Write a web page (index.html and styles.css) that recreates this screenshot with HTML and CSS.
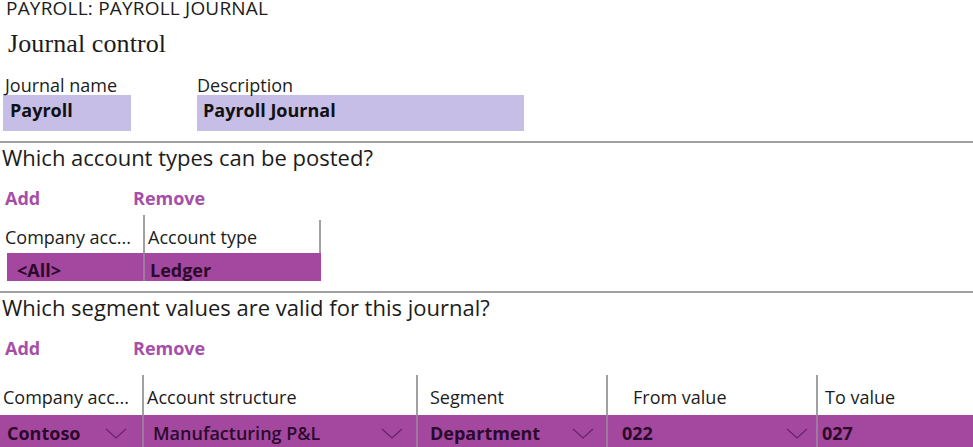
FILE: index.html
```html
<!DOCTYPE html>
<html lang="en">
<head>
  <meta charset="UTF-8" />
  <meta name="viewport" content="width=device-width, initial-scale=1" />
  <title>Payroll journal</title>
  <link rel="stylesheet" href="styles.css">
</head>
<body>

  <div class="page-title">PAYROLL: PAYROLL JOURNAL</div>
  <h1 class="form-title">Journal control</h1>

  <!-- Journal fields -->
  <div class="fields">
    <div class="field field-name">
      <label>Journal name</label>
      <div class="field-box">Payroll</div>
    </div>
    <div class="field field-desc">
      <label>Description</label>
      <div class="field-box">Payroll Journal</div>
    </div>
  </div>

  <!-- Account types -->
  <section class="block">
    <h2>Which account types can be posted?</h2>
    <div class="actions">
      <a class="act act-add">Add</a>
      <a class="act">Remove</a>
    </div>
    <div class="grid grid-types">
      <div class="head">Company acc...</div>
      <div class="head sep">Account type</div>
      <div class="head-end"></div>
      <div class="cell first">&lt;All&gt;</div>
      <div class="cell">Ledger</div>
      <div class="cell-end"></div>
    </div>
  </section>

  <!-- Segment values -->
  <section class="block">
    <h2>Which segment values are valid for this journal?</h2>
    <div class="actions">
      <a class="act act-add">Add</a>
      <a class="act">Remove</a>
    </div>
    <div class="grid grid-segments">
      <div class="head">Company acc...</div>
      <div class="head sep">Account structure</div>
      <div class="head sep col-seg">Segment</div>
      <div class="head sep col-from">From value</div>
      <div class="head sep col-to">To value</div>

      <div class="cell drop col1">Contoso <svg class="chev" viewBox="0 0 22 11"><path d="M1 1 L11 10 L21 1"/></svg></div>
      <div class="cell drop col2 light">Manufacturing P&amp;L <svg class="chev" viewBox="0 0 22 11"><path d="M1 1 L11 10 L21 1"/></svg></div>
      <div class="cell drop col3">Department <svg class="chev" viewBox="0 0 22 11"><path d="M1 1 L11 10 L21 1"/></svg></div>
      <div class="cell drop col4">022 <svg class="chev" viewBox="0 0 22 11"><path d="M1 1 L11 10 L21 1"/></svg></div>
      <div class="cell col5">027</div>
    </div>
  </section>

</body>
</html>
```

FILE: styles.css
```css
body {
  margin: 0;
  font-family: 'Open Sans', sans-serif;
  color: #1c1c1c;
  background-color: #fff;
  overflow: hidden;
}

.page-title {
  font-size: 19px;
  line-height: 16px;
  padding-left: 6px;
  letter-spacing: 0.2px;
  white-space: nowrap;
}

.form-title {
  font-family: 'Liberation Serif', serif;
  font-weight: normal;
  font-size: 26px;
  line-height: 28px;
  margin: 14px 0 0 8px;
  letter-spacing: 0.1px;
}

.fields {
  display: flex;
  margin-top: 17px;
}

.field label {
  display: block;
  font-size: 18px;
  line-height: 20px;
}

.field-box {
  background-color: #c7bee7;
  height: 36px;
  line-height: 30px;
  font-weight: bold;
  font-size: 18px;
  color: #111;
}

.field-name {
  width: 128px;
  margin-left: 3px;
}

.field-name label {
  padding-left: 2px;
}

.field-name .field-box {
  padding-left: 7px;
}

.field-desc {
  width: 327px;
  margin-left: 66px;
}

.field-desc .field-box {
  padding-left: 6px;
}

.block {
  border-top: 2px solid #a0a0a0;
  margin-top: 10px;
}

.block h2 {
  font-weight: normal;
  font-size: 22px;
  line-height: 28px;
  margin: 0 0 0 2px;
}

.actions {
  display: flex;
  margin-top: 17px;
  padding-left: 5px;
}

.act {
  font-weight: bold;
  font-size: 18px;
  line-height: 20px;
  color: #a54fa9;
}

.act-add {
  width: 128px;
}

.grid {
  display: grid;
  font-size: 18px;
}

.head {
  white-space: nowrap;
  overflow: hidden;
}

.sep {
  border-left: 2px solid #a0a0a0;
}

.cell {
  background-color: #a4489f;
  color: #2b0a2b;
  font-weight: bold;
  white-space: nowrap;
}

/* account types table */

.grid-types {
  grid-template-columns: 143px 176px 2px;
  width: 321px;
  margin-top: 7px;
}

.grid-types .head {
  height: 38px;
  padding-top: 6px;
  line-height: 32px;
  box-sizing: border-box;
  padding-left: 5px;
}

.grid-types .head.sep {
  padding-left: 3px;
}

.head-end {
  background-color: #a0a0a0;
  margin-top: 5px;
}

.grid-types .cell {
  height: 28px;
  padding-top: 3px;
  line-height: 28px;
  box-sizing: border-box;
  padding-left: 5px;
  border-left: 2px solid #9d7ba0;
}

.grid-types .cell.first {
  margin-left: 7px;
  padding-left: 10px;
  border-left: none;
}

.cell-end {
  background-color: #a4489f;
}

/* segment values table */

.grid-segments {
  grid-template-columns: 142px 274px 190px 210px 1fr;
  margin-top: 17px;
}

.grid-segments .head {
  height: 40px;
  padding-top: 8px;
  line-height: 28px;
  box-sizing: border-box;
  padding-left: 3px;
}

.grid-segments .head.col-seg {
  padding-left: 12px;
}

.grid-segments .head.col-from {
  padding-left: 25px;
}

.grid-segments .head.col-to {
  padding-left: 7px;
}

.grid-segments .cell {
  height: 36px;
  line-height: 36px;
  box-sizing: border-box;
  border-left: 2px solid #9d7ba0;
}

.grid-segments .cell.col1 {
  border-left: none;
  padding: 0 15px 0 7px;
}

.grid-segments .cell.col2 {
  padding: 0 13px 0 9px;
}

.grid-segments .cell.col3 {
  padding: 0 12px 0 12px;
}

.grid-segments .cell.col4 {
  padding: 0 8px 0 14px;
}

.grid-segments .cell.col5 {
  padding: 0 0 0 4px;
}

.drop {
  display: flex;
  align-items: center;
  justify-content: space-between;
}

.drop.light {
  font-weight: 600;
}

.chev {
  width: 22px;
  height: 11px;
  flex-shrink: 0;
}

.chev path {
  fill: none;
  stroke: #66226a;
  stroke-width: 1.1;
}
```
